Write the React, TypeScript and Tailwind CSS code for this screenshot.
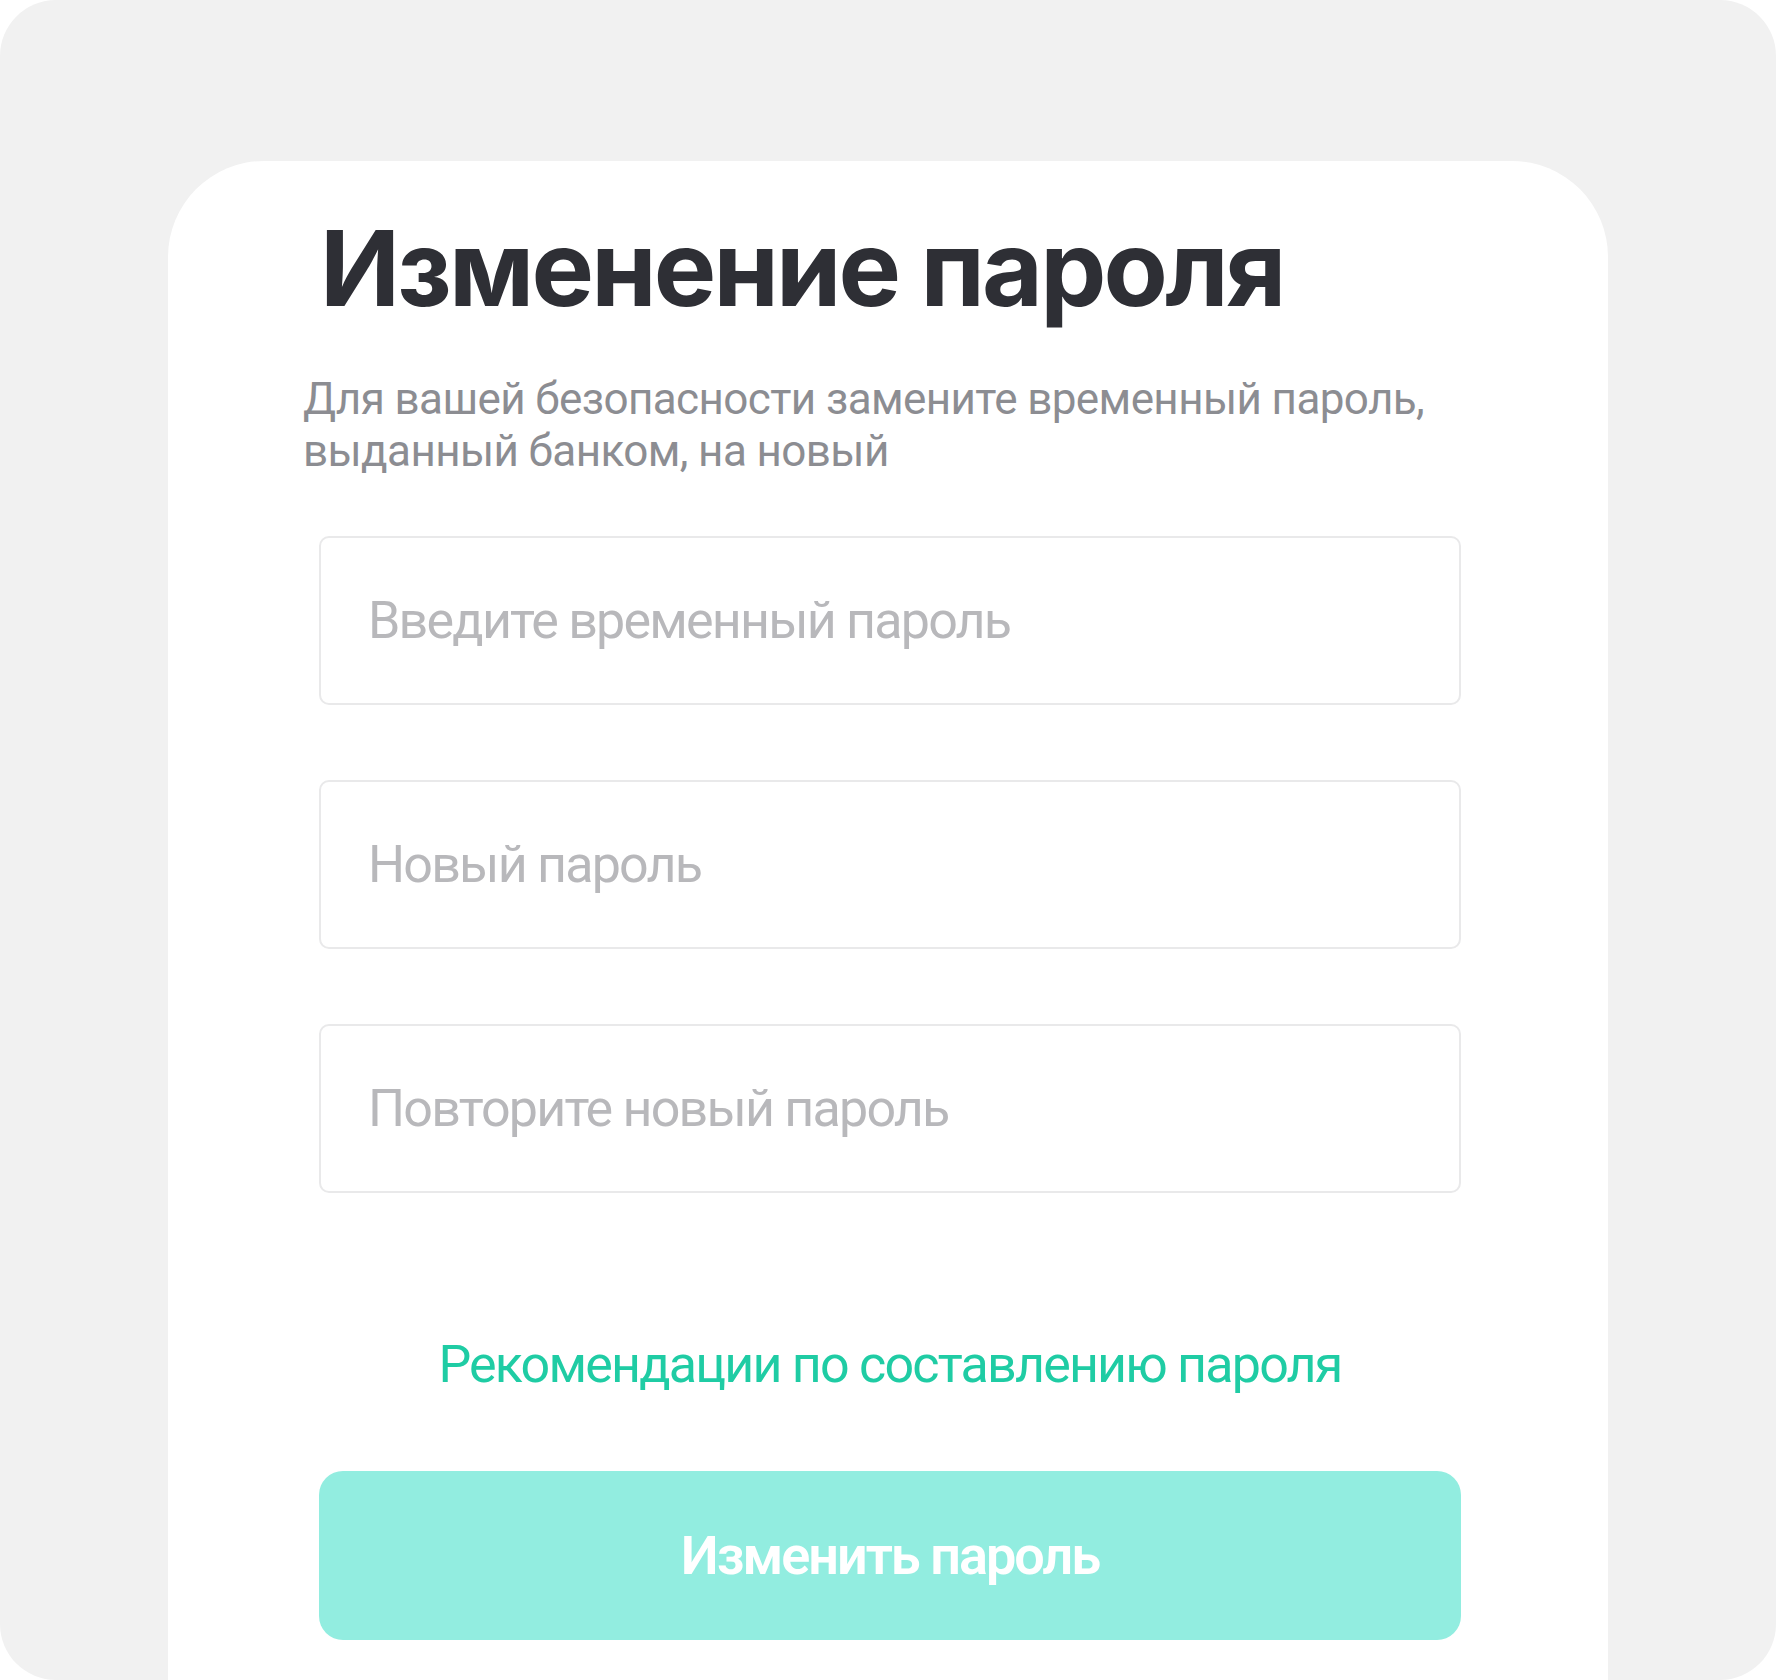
export default function App() {
  const fields = [
    "Введите временный пароль",
    "Новый пароль",
    "Повторите новый пароль",
  ];

  return (
    <div className="w-[1776px] h-[1680px] bg-white">
      <div className="h-full rounded-[56px] bg-[#f1f1f1] overflow-hidden pt-[161px] px-[168px] flex flex-col">
        <div className="flex-1 bg-white rounded-t-[96px] pl-[151px] pr-[147px] pt-[54px] flex flex-col font-['Roboto',sans-serif]">
          <h1 className="font-['Inter',sans-serif] font-bold text-[105px] leading-none tracking-[-2.8px] text-[#2e2f35] ml-[1px]">
            Изменение пароля
          </h1>

          <p className="mt-[53px] -ml-[16px] text-[44px] leading-[52px] tracking-[-0.6px] text-[#8c8d92]">
            Для вашей безопасности замените временный пароль,
            <br />
            выданный банком, на новый
          </p>

          <form
            className="mt-[59px] flex flex-col gap-[75px]"
            onSubmit={e => e.preventDefault()}
          >
            {fields.map(f => (
              <input
                key={f}
                type="password"
                placeholder={f}
                className="w-full h-[169px] rounded-[10px] border-2 border-[#e9e9ea] bg-white px-[47px] text-[52px] tracking-[-1.8px] text-[#2e2f35] placeholder-[#b8b8bb] focus:outline-none"
              />
            ))}
          </form>

          <a className="mt-[140px] text-center text-[52px] leading-[64px] tracking-[-1.8px] text-[#1fcca4] cursor-pointer">
            Рекомендации по составлению пароля
          </a>

          <button
            type="button"
            className="mt-[74px] w-full h-[169px] rounded-[24px] bg-[#92ede0] text-white text-[54px] font-semibold tracking-[-2px]"
          >
            Изменить пароль
          </button>
        </div>
      </div>
    </div>
  );
}
